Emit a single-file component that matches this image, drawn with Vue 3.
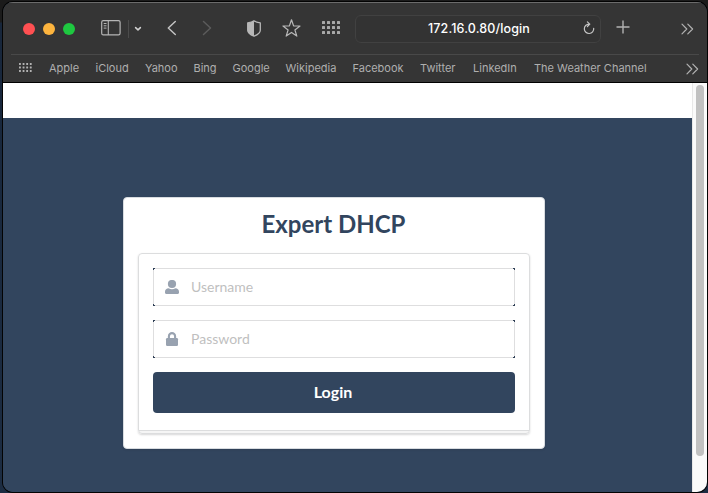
<script setup>
const bookmarks = ['Apple', 'iCloud', 'Yahoo', 'Bing', 'Google', 'Wikipedia', 'Facebook', 'Twitter', 'LinkedIn', 'The Weather Channel']
</script>

<template>
  <div class="desktop">
    <div class="window">
      <header class="chrome">
        <div class="toolbar">
          <div class="lights"><i class="red"></i><i class="yellow"></i><i class="green"></i></div>
          <svg class="sidebar" width="20" height="16" viewBox="0 0 20 16" fill="none" stroke="#b5b5b5">
            <rect x=".7" y=".7" width="18.4" height="14.2" rx="1.6" stroke-width="1.2" />
            <path d="M7.3 1v14" stroke-width="1.1" />
            <path d="M2.7 3.5h2.8M2.7 5.8h2.8M2.7 8.1h2.8" stroke-width="1" />
          </svg>
          <span class="divider"></span>
          <svg class="caret" width="8" height="6" viewBox="0 0 8 6" fill="none" stroke="#d0d0d0" stroke-width="1.5" stroke-linecap="round" stroke-linejoin="round"><path d="M1.6 1.6 4 3.9l2.4-2.3" /></svg>
          <svg class="back" width="10" height="16" viewBox="0 0 10 16" fill="none" stroke="#c2c2c2" stroke-width="1.5" stroke-linecap="round" stroke-linejoin="round"><path d="M8.3 1.5 1.3 8l7 6.5" /></svg>
          <svg class="forward" width="10" height="16" viewBox="0 0 10 16" fill="none" stroke="#5b5b5b" stroke-width="1.5" stroke-linecap="round" stroke-linejoin="round"><path d="m1.5 1.5 7 6.5-7 6.5" /></svg>
          <svg class="shield" width="14" height="17" viewBox="0 0 14 17">
            <path d="M7 .8C5.5 2 3.500 2.500.7 2.800v7.400c0 2.700 2.700 4.500 6.300 6 3.600-1.500 6.300-3.300 6.300-6V2.800C10.500 2.500 8.500 2 7 .8Z" fill="none" stroke="#b7b7b7" stroke-width="1.3" stroke-linejoin="round" />
            <path d="M7 .8C5.500 2 3.500 2.500.7 2.800v7.400c0 2.700 2.700 4.500 6.300 6Z" fill="#b7b7b7" />
          </svg>
          <svg class="star" width="19" height="18" viewBox="0 0 19 18" fill="none" stroke="#b7b7b7" stroke-width="1.25" stroke-linejoin="round"><path d="m9.500 .8 2.100 6.100 6.400.1-5.100 3.900 1.900 6.200-5.300-3.600-5.300 3.600 1.900-6.200L1 7l6.400-.1Z" /></svg>
          <svg class="grid" width="18" height="13" viewBox="0 0 18 13" fill="#a8a8a8">
            <template v-for="r in 3" :key="r"><rect v-for="c in 4" :key="c" :x="(c - 1) * 5" :y="(r - 1) * 5" width="3" height="3" rx=".6" /></template>
          </svg>
          <div class="address">
            <span class="url">172.16.0.80/login</span>
            <svg width="13" height="14" viewBox="0 0 13 14" fill="none" stroke="#c4c4c4" stroke-width="1.2" stroke-linecap="round" stroke-linejoin="round"><path d="M7.100 3.100A4.700 4.700 0 1 0 11.700 7.300M5.400 .9 7.800 3.100 5.400 5.500" /></svg>
          </div>
          <svg class="plus" width="14" height="14" viewBox="0 0 14 14" stroke="#b2b2b2" stroke-width="1.4"><path d="M7 .5v13M.5 7h13" /></svg>
          <svg class="more" width="13" height="12" viewBox="0 0 13 12" fill="none" stroke="#b2b2b2" stroke-width="1.2" stroke-linecap="round" stroke-linejoin="round"><path d="M1 1.200 5.800 6 1 10.800M6.800 1.200 11.600 6l-4.800 4.800" /></svg>
        </div>
        <nav class="bookmarks">
          <svg class="apps" width="13" height="9" viewBox="0 0 13 9" fill="#b2b2b2">
            <template v-for="r in 3" :key="r"><rect v-for="c in 4" :key="c" :x="(c - 1) * 3.600" :y="(r - 1) * 3.500" width="1.900" height="1.900" rx=".3" /></template>
          </svg>
          <span v-for="b in bookmarks" :key="b">{{ b }}</span>
          <svg class="overflow" width="13" height="12" viewBox="0 0 13 12" fill="none" stroke="#b2b2b2" stroke-width="1.2" stroke-linecap="round" stroke-linejoin="round"><path d="M1 1.200 5.800 6 1 10.800M6.800 1.200 11.600 6l-4.800 4.800" /></svg>
        </nav>
      </header>
      <div class="viewport">
        <main class="page">
          <div class="strip"></div>
          <section class="card">
            <h1>Expert DHCP</h1>
            <form class="panel" @submit.prevent>
              <label class="field">
                <svg width="14" height="14" viewBox="0 0 14 14" fill="#98a2b0"><circle cx="7" cy="4" r="4.100" /><path d="M3.600 8.300c2 1.200 4.800 1.200 6.800 0 2 .1 3.600 1.500 3.600 3.500v1c0 .7-.5 1.200-1.200 1.200H1.200C.5 14 0 13.500 0 12.800v-1c0-2 1.600-3.400 3.600-3.500Z" /></svg>
                <input type="text" placeholder="Username" />
              </label>
              <label class="field">
                <svg width="14" height="14" viewBox="0 0 14 14"><rect x="1" y="6" width="12" height="8" rx="1.200" fill="#98a2b0" /><path d="M3.900 6.500V4.200a3.100 3.100 0 0 1 6.200 0v2.300" fill="none" stroke="#98a2b0" stroke-width="2.100" /></svg>
                <input type="password" placeholder="Password" />
              </label>
              <button type="submit">Login</button>
            </form>
          </section>
        </main>
        <div class="scroll"><i></i></div>
      </div>
    </div>
  </div>
</template>

<style>
body { background: #1b1b1b; }
</style>

<style scoped>
* { box-sizing: border-box; }
svg { display: block; flex: none; }
.desktop { width: 708px; height: 493px; padding: 2px 1px 1px 3px; overflow: hidden; background: linear-gradient(#1b1b1b 22px, #17263b 23px, #1c2c42); }
.window { height: 490px; border-radius: 10px; overflow: hidden; background: #32455e; box-shadow: 0 0 0 1px #030303; }
.chrome { height: 81px; background: #353535; border-top: 1px solid #6b6b6b; border-bottom: 1px solid #000; font-family: Inter, sans-serif; }
.toolbar { display: flex; align-items: center; height: 51px; padding-left: 20px; }
.lights { display: flex; gap: 8px; }
.lights i { width: 12px; height: 12px; border-radius: 50%; }
.red { background: #ff5052; }
.yellow { background: #fdb43e; }
.green { background: #1ec840; }
.sidebar { margin-left: 26px; margin-top: -2px; }
.divider { width: 1px; height: 18px; margin-left: 7px; background: #4c4c4c; }
.caret { margin-left: 5px; }
.back { margin-left: 25px; margin-top: -1px; }
.forward { margin-left: 25px; margin-top: -1px; }
.shield { margin-left: 35px; margin-top: -1px; }
.star { margin-left: 21px; margin-top: -2px; }
.grid { margin-left: 21px; margin-top: -2px; }
.address { display: flex; align-items: center; justify-content: center; position: relative; width: 246px; height: 28px; margin-left: 15px; border: 1px solid #414141; border-radius: 6px; background: #333; color: #fff; }
.url { padding-left: 2px; font-size: 12.5px; font-weight: 500; letter-spacing: .13px; white-space: nowrap; }
.address svg { position: absolute; right: 5px; top: 5px; }
.plus { margin-left: 15px; margin-top: -3px; }
.more { margin-left: 51px; }
.bookmarks { display: grid; grid-template-columns: 30px 46.500px 49.500px 48.500px 39px 53px 67px 67.500px 53px 61px 152px 13px; align-items: center; height: 28px; margin: 0 8px; padding: 0 0 2px 8px; border-top: 1px solid #494949; color: #afafaf; font-size: 11px; white-space: nowrap; }
.apps { margin-top: 0; }
.overflow { margin-top: 3px; }
.viewport { display: flex; height: 409px; }
.page { width: 689px; background: #32455e; font-family: Lato, sans-serif; }
.strip { height: 35px; background: #fff; }
.scroll { width: 15px; padding: 2px 0 0 3px; background: #fafafa; border-left: 1px solid #e8e8e8; }
.scroll i { display: block; width: 8px; height: 371px; border-radius: 4px; background: #c1c1c1; }
.card { width: 422px; height: 252px; margin: 79px 0 0 120px; padding: 14px 14px; border: 1px solid #d8dce0; border-radius: 4px; background: #fff; box-shadow: 0 1px 2px rgba(34, 36, 38, .15); }
h1 { height: 27px; margin: 0 0 14px; padding-right: 1px; color: #32455e; font-size: 24px; font-weight: 700; line-height: 24px; text-align: center; }
.panel { height: 181px; padding: 14px; border: 1px solid #dcddde; border-radius: 4px; background: linear-gradient(#fff 176px, #dcddde 176px, #dcddde 177px, #f5f5f5 177px); box-shadow: 0 1px 2px rgba(34, 36, 38, .18); }
.field { display: flex; align-items: center; height: 38px; margin-bottom: 14px; padding-left: 11px; border: 1px solid #dcddde; background: linear-gradient(45deg, #32455e 1.500px, transparent 2px) border-box, linear-gradient(135deg, #32455e 1.500px, transparent 2px) border-box, linear-gradient(225deg, #32455e 1.500px, transparent 2px) border-box, linear-gradient(315deg, #32455e 1.500px, transparent 2px) border-box; border-color: rgba(34, 36, 38, .15); }
input { flex: 1; min-width: 0; margin-left: 12px; padding: 0 0 2px; border: 0; outline: 0; background: transparent; font: 14px Lato, sans-serif; }
input::placeholder { color: #bfbfbf; opacity: 1; }
button { display: block; width: 100%; height: 41px; padding: 0 2px 2px 0; border: 0; border-radius: 4px; background: #32455e; color: #fff; font: 700 16px/39px Lato, sans-serif; }
</style>
